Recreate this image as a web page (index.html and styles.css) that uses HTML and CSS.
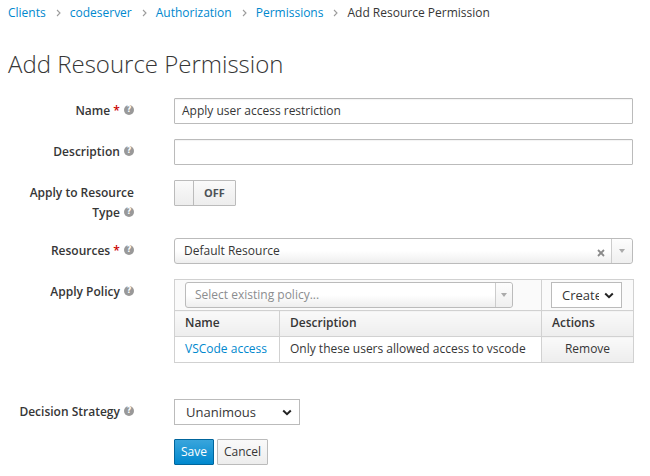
FILE: index.html
```html
<!DOCTYPE html>
<html lang="en">
<head>
<meta charset="utf-8">
<title>Add Resource Permission</title>
<link rel="stylesheet" href="styles.css">
</head>
<body>
<div class="page">
  <ol class="crumbs">
    <li><a class="link">Clients</a></li>
    <li class="sep"><svg width="5" height="8" viewBox="0 0 5 8"><polyline points="1,1 4,4 1,7" fill="none" stroke="#9c9c9c" stroke-width="1.1"/></svg></li>
    <li><a class="link">codeserver</a></li>
    <li class="sep"><svg width="5" height="8" viewBox="0 0 5 8"><polyline points="1,1 4,4 1,7" fill="none" stroke="#9c9c9c" stroke-width="1.1"/></svg></li>
    <li><a class="link">Authorization</a></li>
    <li class="sep"><svg width="5" height="8" viewBox="0 0 5 8"><polyline points="1,1 4,4 1,7" fill="none" stroke="#9c9c9c" stroke-width="1.1"/></svg></li>
    <li><a class="link">Permissions</a></li>
    <li class="sep"><svg width="5" height="8" viewBox="0 0 5 8"><polyline points="1,1 4,4 1,7" fill="none" stroke="#9c9c9c" stroke-width="1.1"/></svg></li>
    <li class="current">Add Resource Permission</li>
  </ol>

  <h1 class="title">Add Resource Permission</h1>

  <div class="form">
    <div class="row">
      <div class="lbl">Name <span class="req">*</span> <span class="help">?</span></div>
      <div class="ctl"><div class="input">Apply user access restriction</div></div>
    </div>

    <div class="row">
      <div class="lbl">Description <span class="help">?</span></div>
      <div class="ctl"><div class="input"></div></div>
    </div>

    <div class="row">
      <div class="lbl">Apply to Resource Type <span class="help">?</span></div>
      <div class="ctl">
        <div class="switch"><span class="sw-handle"></span><span class="sw-off">OFF</span></div>
      </div>
    </div>

    <div class="row">
      <div class="lbl">Resources <span class="req">*</span> <span class="help">?</span></div>
      <div class="ctl">
        <div class="s2 s2-res">
          <span class="s2-text">Default Resource</span>
          <span class="s2-clear"><svg width="8" height="8" viewBox="0 0 8 8"><path d="M1 1 L7 7 M7 1 L1 7" stroke="#8a8a8a" stroke-width="1.8"/></svg></span>
          <span class="s2-arrow"><svg width="6" height="4" viewBox="0 0 6 4"><polygon points="0,0 6,0 3,4" fill="#aaa"/></svg></span>
        </div>
      </div>
    </div>

    <div class="row row-table">
      <div class="lbl">Apply Policy <span class="help">?</span></div>
      <div class="ctl">
        <table class="ptable">
          <colgroup><col class="c1"><col class="c2"><col class="c3"></colgroup>
          <thead>
            <tr class="toolbar">
              <td colspan="2" class="tb-left">
                <div class="s2 s2-pol">
                  <span class="s2-text placeholder">Select existing policy...</span>
                  <span class="s2-arrow"><svg width="6" height="4" viewBox="0 0 6 4"><polygon points="0,0 6,0 3,4" fill="#aaa"/></svg></span>
                </div>
              </td>
              <td class="tb-right">
                <div class="nsel nsel-create">
                  <span class="nsel-text">Create Policy...</span>
                  <svg class="chev" width="10" height="7" viewBox="0 0 10 7"><polyline points="1.2,1.5 5,5.2 8.8,1.5" fill="none" stroke="#222" stroke-width="2"/></svg>
                </div>
              </td>
            </tr>
            <tr class="head">
              <th>Name</th>
              <th>Description</th>
              <th>Actions</th>
            </tr>
          </thead>
          <tbody>
            <tr>
              <td><a class="link">VSCode access</a></td>
              <td>Only these users allowed access to vscode</td>
              <td class="action">Remove</td>
            </tr>
          </tbody>
        </table>
      </div>
    </div>

    <div class="row row-strategy">
      <div class="lbl">Decision Strategy <span class="help">?</span></div>
      <div class="ctl">
        <div class="nsel nsel-strategy">
          <span class="nsel-text">Unanimous</span>
          <svg class="chev" width="10" height="7" viewBox="0 0 10 7"><polyline points="1.2,1.5 5,5.2 8.8,1.5" fill="none" stroke="#222" stroke-width="2"/></svg>
        </div>
      </div>
    </div>

    <div class="row">
      <div class="lbl"></div>
      <div class="ctl buttons">
        <button class="btn btn-primary">Save</button>
        <button class="btn btn-default">Cancel</button>
      </div>
    </div>
  </div>
</div>
</body>
</html>
```

FILE: styles.css
```css
html, body {
  margin: 0;
  padding: 0;
  background: #fff;
}

body {
  font-family: "Open Sans", "Liberation Sans", sans-serif;
  font-size: 12px;
  color: #363636;
}

.page {
  padding: 3px 8px 0 8px;
}

.link {
  color: #0088ce;
  text-decoration: none;
}

/* breadcrumb */
.crumbs {
  list-style: none;
  margin: 0;
  padding: 0;
  display: flex;
  align-items: center;
  line-height: 20px;
  height: 20px;
}

.crumbs .sep {
  display: flex;
  align-items: center;
  margin: 0 9px 0 10px;
}

.crumbs .current {
  color: #363636;
}

/* title */
.title {
  font-size: 24px;
  font-weight: 300;
  line-height: 26px;
  margin: 28px 0 21px 0;
  color: #363636;
}

/* form */
.row {
  display: flex;
  margin-bottom: 15px;
}

.lbl {
  width: 126px;
  flex: none;
  margin-right: 40px;
  padding-top: 3px;
  line-height: 20px;
  text-align: right;
  font-weight: 600;
  color: #363636;
}

.ctl {
  width: 459px;
  flex: none;
}

.req {
  color: #cc0000;
  font-weight: 600;
}

.help {
  display: inline-block;
  width: 10px;
  height: 10px;
  border-radius: 50%;
  background: #999;
  color: #fff;
  font-family: "DejaVu Sans", sans-serif;
  font-size: 8px;
  font-weight: bold;
  line-height: 10px;
  text-align: center;
  vertical-align: middle;
  margin-left: 1px;
  position: relative;
  top: -2px;
}

.input {
  box-sizing: border-box;
  height: 26px;
  border: 1px solid #bbb;
  border-radius: 1px;
  padding: 2px 7px;
  line-height: 20px;
  background: #fff;
  box-shadow: inset 0 1px 1px rgba(3, 3, 3, 0.05);
  color: #363636;
}

/* switch */
.switch {
  box-sizing: border-box;
  display: flex;
  width: 62px;
  height: 26px;
  border: 1px solid #bbb;
  border-radius: 1px;
  overflow: hidden;
}

.sw-handle {
  width: 18px;
  border-right: 1px solid #bbb;
  background: linear-gradient(#fafafa, #ededed);
}

.sw-off {
  flex: 1;
  text-align: center;
  line-height: 24px;
  font-size: 11px;
  font-weight: 700;
  color: #4d5258;
  background: linear-gradient(#fafafa, #ededed);
}

/* select2-like */
.s2 {
  box-sizing: border-box;
  position: relative;
  display: flex;
  align-items: center;
  height: 26px;
  border: 1px solid #bbb;
  border-radius: 3px;
  background: linear-gradient(#fff 0%, #fff 50%, #eee 100%);
}

.s2-text {
  flex: 1;
  padding-left: 9px;
  line-height: 20px;
  color: #363636;
  white-space: nowrap;
  overflow: hidden;
}

.s2-text.placeholder {
  color: #8b8d8f;
}

.s2-clear {
  display: flex;
  align-items: center;
  margin-right: 6px;
  margin-top: 4px;
}

.s2-arrow {
  box-sizing: border-box;
  align-self: stretch;
  display: flex;
  align-items: center;
  justify-content: center;
  width: 21px;
  border-left: 1px solid #ccc;
  background: linear-gradient(#fdfdfd, #efefef);
  border-radius: 0 3px 3px 0;
}

.s2-pol {
  width: 328px;
}

.s2-pol .s2-arrow {
  width: 17px;
}

/* native select look */
.nsel {
  box-sizing: border-box;
  display: flex;
  align-items: center;
  height: 26px;
  border: 1px solid #bbb;
  background: #fff;
}

.nsel-text {
  flex: 1;
  overflow: hidden;
  white-space: nowrap;
  line-height: 20px;
  color: #363636;
}

.nsel .chev {
  flex: none;
  margin-right: 7px;
}

.nsel-create {
  width: 71px;
}

.nsel-create .nsel-text {
  padding-left: 10px;
  margin-right: 5px;
  font-size: 13px;
}

.nsel-strategy {
  width: 126px;
}

.nsel-strategy .nsel-text {
  padding-left: 11px;
  font-size: 13px;
}

/* policy table */
.row-table {
  margin-bottom: 36px;
}

.row-strategy {
  margin-bottom: 14px;
}

.ptable {
  width: 459px;
  border-collapse: collapse;
  table-layout: fixed;
  border: 1px solid #d1d1d1;
}

.ptable .c1 { width: 105px; }
.ptable .c2 { width: 262px; }
.ptable .c3 { width: 92px; }

.ptable td,
.ptable th {
  border: 1px solid #d1d1d1;
  padding: 2px 10px 3px 10px;
  line-height: 20px;
  text-align: left;
  white-space: nowrap;
}

.ptable th {
  font-weight: 600;
  background: linear-gradient(#fafafa, #ededed);
}

.toolbar td {
  background: #fafafa;
  padding: 2px 10px 2px 10px;
}

.toolbar .tb-right {
  padding-left: 9px;
}

.ptable td.action {
  text-align: center;
  background: linear-gradient(#fafafa, #ededed);
}

/* buttons */
.buttons {
  display: flex;
  gap: 3px;
}

.btn {
  box-sizing: border-box;
  height: 26px;
  padding: 2px 6px;
  border: 1px solid #bbb;
  border-radius: 1px;
  font-family: "Open Sans", "Liberation Sans", sans-serif;
  font-size: 12px;
  line-height: 20px;
  margin: 0;
}

.btn-primary {
  color: #fff;
  background: linear-gradient(#39a5dc, #0088ce);
  border-color: #00659c;
}

.btn-default {
  color: #363636;
  background: linear-gradient(#fafafa, #ededed);
}
```
